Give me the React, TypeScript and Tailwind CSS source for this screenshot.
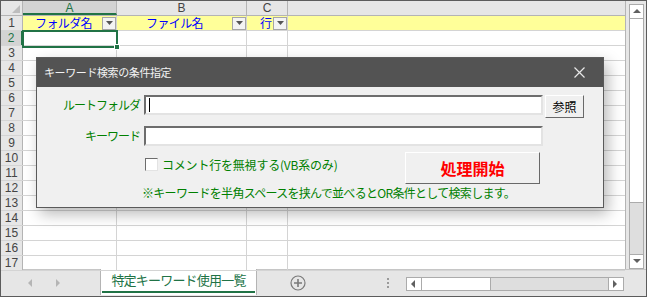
import React from "react";

const jp = { fontFamily: '"Noto Sans CJK JP", "Noto Sans", sans-serif' };
const num = { fontFamily: '"Liberation Sans", Arial, sans-serif' };

function Drop() {
  return (
    <div className="w-[14px] h-[13px] border border-[#a6a6a6] bg-[#f3f3f3] flex items-center justify-center shrink-0">
      <svg width="7" height="4" viewBox="0 0 7 4">
        <path d="M0 0h7L3.5 4z" fill="#555" />
      </svg>
    </div>
  );
}

function Tri({ dir, color }: { dir: "l" | "r" | "u" | "d"; color: string }) {
  const d = {
    l: "M5 0v8L1 4z",
    r: "M1 0v8l4-4z",
    u: "M0 5h8L4 1z",
    d: "M0 1h8L4 5z",
  }[dir];
  return (
    <svg width="8" height="8" viewBox="0 0 8 8">
      <path d={d} fill={color} />
    </svg>
  );
}

export default function App() {
  const rows = Array.from({ length: 17 }, (_, i) => i + 1);
  return (
    <div className="relative w-[647px] h-[297px] bg-white border border-[#5c5c5c] overflow-hidden" style={jp}>
      <div className="flex h-[268px]">
        {/* grid */}
        <div className="relative w-[625px] flex flex-col border-r border-[#b4b4b4]">
          <div className="flex h-[15px] bg-[#e6e6e6] border-b border-[#b4b4b4] text-[12px] leading-[14px] text-[#444]" style={num}>
            <div className="w-[22px] border-r border-[#b4b4b4] relative">
              <svg className="absolute right-[2px] bottom-[2px]" width="8" height="8" viewBox="0 0 8 8">
                <path d="M8 0v8H0z" fill="#bdbdbd" />
              </svg>
            </div>
            <div className="w-[94px] border-r border-[#b4b4b4] bg-[#d3d3d3] text-[#217346] text-center border-b-2 border-b-[#217346]">A</div>
            <div className="w-[130px] border-r border-[#b4b4b4] text-center">B</div>
            <div className="w-[41px] border-r border-[#b4b4b4] text-center">C</div>
            <div className="flex-1" />
          </div>
          {rows.map((r) => (
            <div key={r} className="flex h-[15px] shrink-0 border-b border-[#d4d4d4]">
              <div
                className={
                  r === 2
                    ? "w-[22px] bg-[#d3d3d3] border-r-2 border-[#217346] text-[#217346] text-[12px] leading-[14px] text-center"
                    : "w-[22px] bg-[#e6e6e6] border-r border-[#b4b4b4] text-[#444] text-[12px] leading-[14px] text-center"
                }
                style={num}
              >
                {r}
              </div>
              {r === 1 ? (
                <>
                  <div className="w-[94px] bg-[#ffff99] border-r border-[#d4d4d4] flex items-center text-[12px] tracking-[-0.6px] text-[#0000ff] leading-[14px]">
                    <span className="flex-1 text-center pl-[2px]">フォルダ名</span>
                    <Drop />
                  </div>
                  <div className="w-[130px] bg-[#ffff99] border-r border-[#d4d4d4] flex items-center text-[12px] tracking-[-0.6px] text-[#0000ff] leading-[14px]">
                    <span className="flex-1 text-center">ファイル名</span>
                    <Drop />
                  </div>
                  <div className="w-[41px] bg-[#ffff99] border-r border-[#d4d4d4] flex items-center text-[12px] text-[#0000ff] leading-[14px]">
                    <span className="flex-1 text-right pr-[1px]">行</span>
                    <Drop />
                  </div>
                  <div className="flex-1 bg-[#ffff99]" />
                </>
              ) : (
                <>
                  <div className="w-[94px] border-r border-[#d4d4d4]" />
                  <div className="w-[130px] border-r border-[#d4d4d4]" />
                  <div className="w-[41px] border-r border-[#d4d4d4]" />
                  <div className="flex-1" />
                </>
              )}
            </div>
          ))}
          {/* active cell */}
          <div className="absolute left-[21px] top-[29px] w-[96px] h-[18px] border-2 border-[#217346]">
            <div className="absolute -right-[4px] -bottom-[4px] w-[6px] h-[6px] bg-[#217346] border border-white" />
          </div>
        </div>
        {/* vertical scrollbar */}
        <div className="flex-1 bg-[#e6e6e6] pt-[3px] pl-[3px] pr-[2px]">
          <div className="w-[15px] h-[265px] flex flex-col border border-[#ababab] bg-white">
            <div className="h-[14px] flex items-center justify-center border-b border-[#ababab]">
              <Tri dir="u" color="#606060" />
            </div>
            <div className="h-[184px] bg-white border-b border-[#ababab]" />
            <div className="flex-1 bg-[#dedede]" />
            <div className="h-[14px] flex items-center justify-center border-t border-[#ababab] bg-white">
              <Tri dir="d" color="#606060" />
            </div>
          </div>
        </div>
      </div>

      {/* sheet tabs */}
      <div className="flex items-start h-[27px] bg-[#e6e6e6] border-t border-[#c6c6c6]">
        <div className="w-[99px] h-full flex items-center pl-[26px] gap-[20px]">
          <Tri dir="l" color="#b5b5b5" />
          <Tri dir="r" color="#b5b5b5" />
        </div>
        <div className="w-[157px] h-[26px] -mt-[1px] bg-white border-x border-[#b4b4b4] flex flex-col">
          <div className="flex-1 flex items-center justify-center text-[13px] tracking-[-0.8px] text-[#217346]">特定キーワード使用一覧</div>
          <div className="h-[2px] bg-[#217346] mx-[1px] mb-[2px]" />
        </div>
        <div className="w-[82px] h-full flex items-center justify-center">
          <svg width="16" height="16" viewBox="0 0 16 16">
            <circle cx="8" cy="8" r="7" fill="none" stroke="#7a7a7a" strokeWidth="1.2" />
            <path d="M8 4v8M4 8h8" stroke="#7a7a7a" strokeWidth="1.6" />
          </svg>
        </div>
        <div className="w-[68px] h-full flex flex-col items-center justify-center gap-[2px] pl-[30px]">
          <div className="w-[2px] h-[2px] bg-[#9a9a9a]" />
          <div className="w-[2px] h-[2px] bg-[#9a9a9a]" />
          <div className="w-[2px] h-[2px] bg-[#9a9a9a]" />
        </div>
        <div className="mt-[7px] ml-[-1px] flex h-[14px] w-[218px] border border-[#ababab] bg-[#dedede]">
          <div className="w-[15px] bg-white border-r border-[#ababab] flex items-center justify-center">
            <Tri dir="l" color="#606060" />
          </div>
          <div className="w-[69px] bg-white border-r border-[#ababab]" />
          <div className="flex-1" />
          <div className="w-[15px] bg-white border-l border-[#ababab] flex items-center justify-center">
            <Tri dir="r" color="#606060" />
          </div>
        </div>
      </div>

      {/* dialog */}
      <div className="absolute left-[35px] top-[56px] w-[568px] h-[151px] bg-[#f0f0f0] border border-[#5a5a5a] shadow-[4px_6px_14px_rgba(0,0,0,0.28)]">
        <div className="h-[29px] bg-[#535353] flex items-center justify-between pl-[7px] pr-[18px]">
          <span className="text-[11px] tracking-[-0.4px] text-[#f2f2f2]">キーワード検索の条件指定</span>
          <svg width="11" height="11" viewBox="0 0 11 11">
            <path d="M0.5 0.5l10 10M10.5 0.5l-10 10" stroke="#e8e8e8" strokeWidth="1.2" />
          </svg>
        </div>
        <div className="pt-[8px]">
          <div className="flex items-start h-[23px]">
            <div className="w-[103px] h-[20px] flex items-center justify-end text-[12px] tracking-[-1px] text-[#008000]">ルートフォルダ</div>
            <div className="ml-[4px] w-[399px] h-[20px] bg-white border-2 border-t-[#6d6d6d] border-l-[#6d6d6d] border-r-[#e3e3e3] border-b-[#e3e3e3] flex items-center pl-[3px]">
              <div className="w-[1px] h-[14px] bg-black" />
            </div>
            <div className="ml-[2px] w-[39px] h-[23px] bg-[#f0f0f0] border border-t-white border-l-white border-r-[#696969] border-b-[#696969] flex items-center justify-center text-[12px] text-black">参照</div>
          </div>
          <div className="flex items-start mt-[8px] h-[20px]">
            <div className="w-[103px] h-[20px] flex items-center justify-end text-[12px] tracking-[-1px] text-[#008000]">キーワード</div>
            <div className="ml-[4px] w-[399px] h-[20px] bg-white border-2 border-t-[#6d6d6d] border-l-[#6d6d6d] border-r-[#e3e3e3] border-b-[#e3e3e3]" />
          </div>
          <div className="flex items-start mt-[6px] h-[32px]">
            <div className="w-[368px] pl-[108px] pt-[6px] flex items-center">
              <div className="w-[13px] h-[13px] bg-white border border-t-[#6d6d6d] border-l-[#6d6d6d] border-r-[#e3e3e3] border-b-[#e3e3e3]" />
              <span className="ml-[4px] text-[12px] leading-[13px] tracking-[-0.2px] text-[#008000]">コメント行を無視する(VB系のみ)</span>
            </div>
            <div className="w-[135px] h-[32px] bg-[#f0f0f0] border border-t-white border-l-white border-r-[#696969] border-b-[#696969] flex items-center justify-center text-[16px] font-bold text-[#ff0000]">処理開始</div>
          </div>
          <div className="mt-[2px] pl-[105px] text-[12px] leading-[14px] tracking-[-0.7px] text-[#008000]">
            ※キーワードを半角スペースを挟んで並べるとOR条件として検索します。
          </div>
        </div>
      </div>
    </div>
  );
}
